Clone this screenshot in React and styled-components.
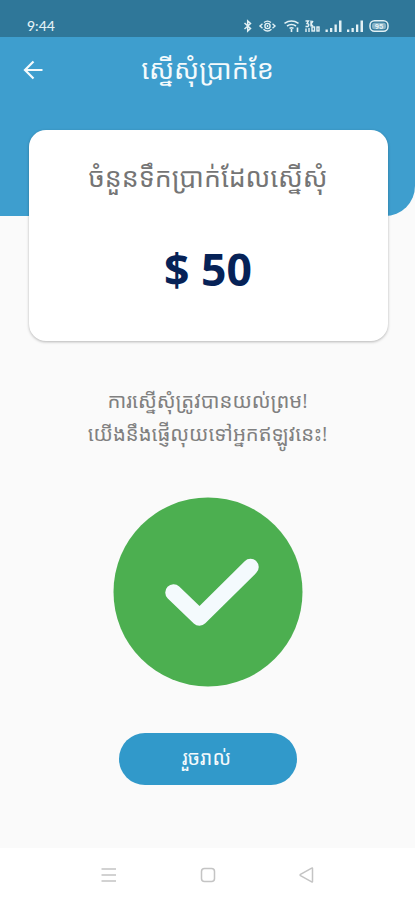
import React from "react";
import styled, { createGlobalStyle } from "styled-components";

const GlobalStyle = createGlobalStyle`
  * { box-sizing: border-box; }
  html, body { margin: 0; padding: 0; background: #fafafa; }
  body { font-family: "Open Sans", "Noto Sans", "Noto Sans Khmer", sans-serif; }
`;

const Screen = styled.div`
  width: 415px;
  height: 900px;
  display: flex;
  flex-direction: column;
  overflow: hidden;
  background: #fafafa;
`;

const StatusBar = styled.div`
  flex: none;
  height: 37px;
  padding: 14px 25px 0 27px;
  display: flex;
  justify-content: space-between;
  background: #2f7799;
  color: #e3f1f5;
`;

const Clock = styled.span`
  font: 500 14px/24px Lato, sans-serif;
`;

const StatusIcons = styled.svg`
  display: block;
  width: 150px;
  height: 23px;
`;

const Header = styled.header`
  flex: none;
  height: 179px;
  padding: 16px 22px;
  background: #3e9ece;
  border-bottom-right-radius: 30px;
`;

const TitleRow = styled.div`
  display: grid;
  grid-template-columns: 22px 1fr 22px;
  align-items: center;
  height: 32px;
`;

const BackButton = styled.button`
  padding: 0;
  border: 0;
  background: none;
  height: 24px;
`;

const KhmerLine = styled.span`
  display: block;
  margin: 0;
  font-weight: 400;
  white-space: nowrap;
  text-align: center;
  font-size: ${(p) => p.$size}px;
  line-height: ${(p) => p.$line}px;
  color: ${(p) => p.$color};
`;

const Card = styled.section`
  flex: none;
  z-index: 1;
  width: 359px;
  height: 211px;
  margin: -86px 0 0 28.5px;
  padding-top: 25px;
  border-radius: 17px;
  background: #fff;
  box-shadow: 0 1px 3px rgba(0, 0, 0, 0.28);
`;

const Amount = styled.div`
  margin-top: 46px;
  text-align: center;
  font: 700 44.5px/48px "Open Sans", sans-serif;
  color: #062257;
`;

const Message = styled.div`
  flex: none;
  margin-top: 43px;
  height: 66px;
`;

const SuccessIcon = styled.svg`
  flex: none;
  align-self: center;
  width: 190px;
  height: 190px;
  margin-top: 47px;
`;

const DoneButton = styled.button`
  flex: none;
  align-self: center;
  width: 178px;
  height: 52px;
  margin-top: 46px;
  padding: 0 2px 3px 0;
  border: 0;
  border-radius: 26px;
  background: #3199ca;
  font-family: inherit;
`;

const NavBar = styled.nav`
  flex: none;
  height: 52px;
  margin-top: auto;
  padding: 2px 99px 0;
  display: flex;
  justify-content: space-between;
  align-items: center;
  background: #fff;
`;

const NavIcon = styled.svg`
  width: 18px;
  height: 18px;
  fill: none;
  stroke: #c4c4c4;
  stroke-width: 1.5;
`;

export default function App() {
  return (
    <>
      <GlobalStyle />
      <Screen>
        <StatusBar>
          <Clock>9:44</Clock>
          <StatusIcons viewBox="240 14 150 23" fill="none" stroke="currentColor">
            <path d="M244.500 23l6 5.500-2.800 2.500V21l2.800 2.500-6 5.500" strokeWidth="1.5" />
            <g strokeWidth="1.4">
              <circle cx="267.500" cy="26" r="2.600" />
              <path d="M267.500 25v2M262.500 23.800l-2.500 2.200 2.500 2.200M272.500 23.800l2.500 2.200-2.500 2.200M263.500 29.300q4 3.500 8 0M264 22.500q3.500-2.800 7 0" />
            </g>
            <g strokeWidth="1.6">
              <path d="M284.500 23.300q7-4.500 14 0M287 26q4.500-3 9 0M289.500 28.400q2-1.300 4 0" />
              <path d="M291.500 29v3M297.500 27.500v4.500" />
            </g>
            <g strokeWidth="1.4">
              <path d="M305.500 21h3l-1.500 2.500q3 .5 1 3h-2.500M311 20.500v6M306 28.500v3.500M309 28v4M313 21l-2 3 2 2.500" />
              <rect x="312" y="27" width="2.500" height="4" />
              <rect x="317" y="27" width="2" height="4" />
            </g>
            <g fill="currentColor" stroke="none">
              <path d="M325.500 29.500h2.300v2.500h-2.300zM330 28h2.300v4H330zM334.500 24.500h2.300V32h-2.300zM339 20.500h2.500V32H339z" />
              <path d="M347 29.500h2.300v2.500H347zM351.500 28h2.300v4h-2.300zM356 24.500h2.300V32H356zM360.500 20.500h2.500V32h-2.500z" />
            </g>
            <rect x="370" y="20.700" width="18" height="10.600" rx="4.500" strokeWidth="1.500" />
            <rect x="372" y="22.800" width="14" height="6.500" rx="2.500" fill="currentColor" fillOpacity=".5" stroke="none" />
            <text x="379" y="29" textAnchor="middle" fill="currentColor" stroke="none" fontFamily="Roboto, sans-serif" fontSize="7.500" fontWeight="700">95</text>
          </StatusIcons>
        </StatusBar>
        <Header>
          <TitleRow>
            <BackButton aria-label="Back">
              <svg width="22" height="24" viewBox="0 0 22 24" fill="none" stroke="#f4fafc" strokeWidth="2.200">
                <path d="M20.500 13H3M11.500 4.500L3 13L11.500 21.500" />
              </svg>
            </BackButton>
            <KhmerLine as="h1" $size={27} $line={32} $color="#f4fafc">ស្នើសុំប្រាក់ខែ</KhmerLine>
          </TitleRow>
        </Header>
        <Card>
          <KhmerLine $size={26.7} $line={44} $color="#757575">ចំនួនទឹកប្រាក់ដែលស្នើសុំ</KhmerLine>
          <Amount>$ 50</Amount>
        </Card>
        <Message>
          <KhmerLine $size={20.3} $line={33} $color="#808080">ការស្នើសុំត្រូវបានយល់ព្រម!</KhmerLine>
          <KhmerLine $size={20.3} $line={33} $color="#808080">យើងនឹងផ្ញើលុយទៅអ្នកឥឡូវនេះ!</KhmerLine>
        </Message>
        <SuccessIcon viewBox="0 0 190 190">
          <circle cx="95" cy="95" r="94.500" fill="#4caf50" />
          <path d="M60.500 95.500L86.500 120.500L137.500 70" fill="none" stroke="#f4fafd" strokeWidth="16.500" strokeLinecap="round" strokeLinejoin="round" />
        </SuccessIcon>
        <DoneButton>
          <KhmerLine $size={20} $line={32} $color="#f4fafc">រួចរាល់</KhmerLine>
        </DoneButton>
        <NavBar>
          <NavIcon viewBox="0 0 18 18"><path d="M2.500 3h14.500M2.500 9h14.500M2.500 15h14.500" /></NavIcon>
          <NavIcon viewBox="0 0 18 18"><rect x="2.500" y="2.500" width="13" height="13" rx="3" /></NavIcon>
          <NavIcon viewBox="0 0 18 18"><path d="M14.500 2.500v13q0 .8-.8.4L2.500 9.600q-.8-.6 0-1.200L13.700 2.100q.8-.4.800.4z" /></NavIcon>
        </NavBar>
      </Screen>
    </>
  );
}
